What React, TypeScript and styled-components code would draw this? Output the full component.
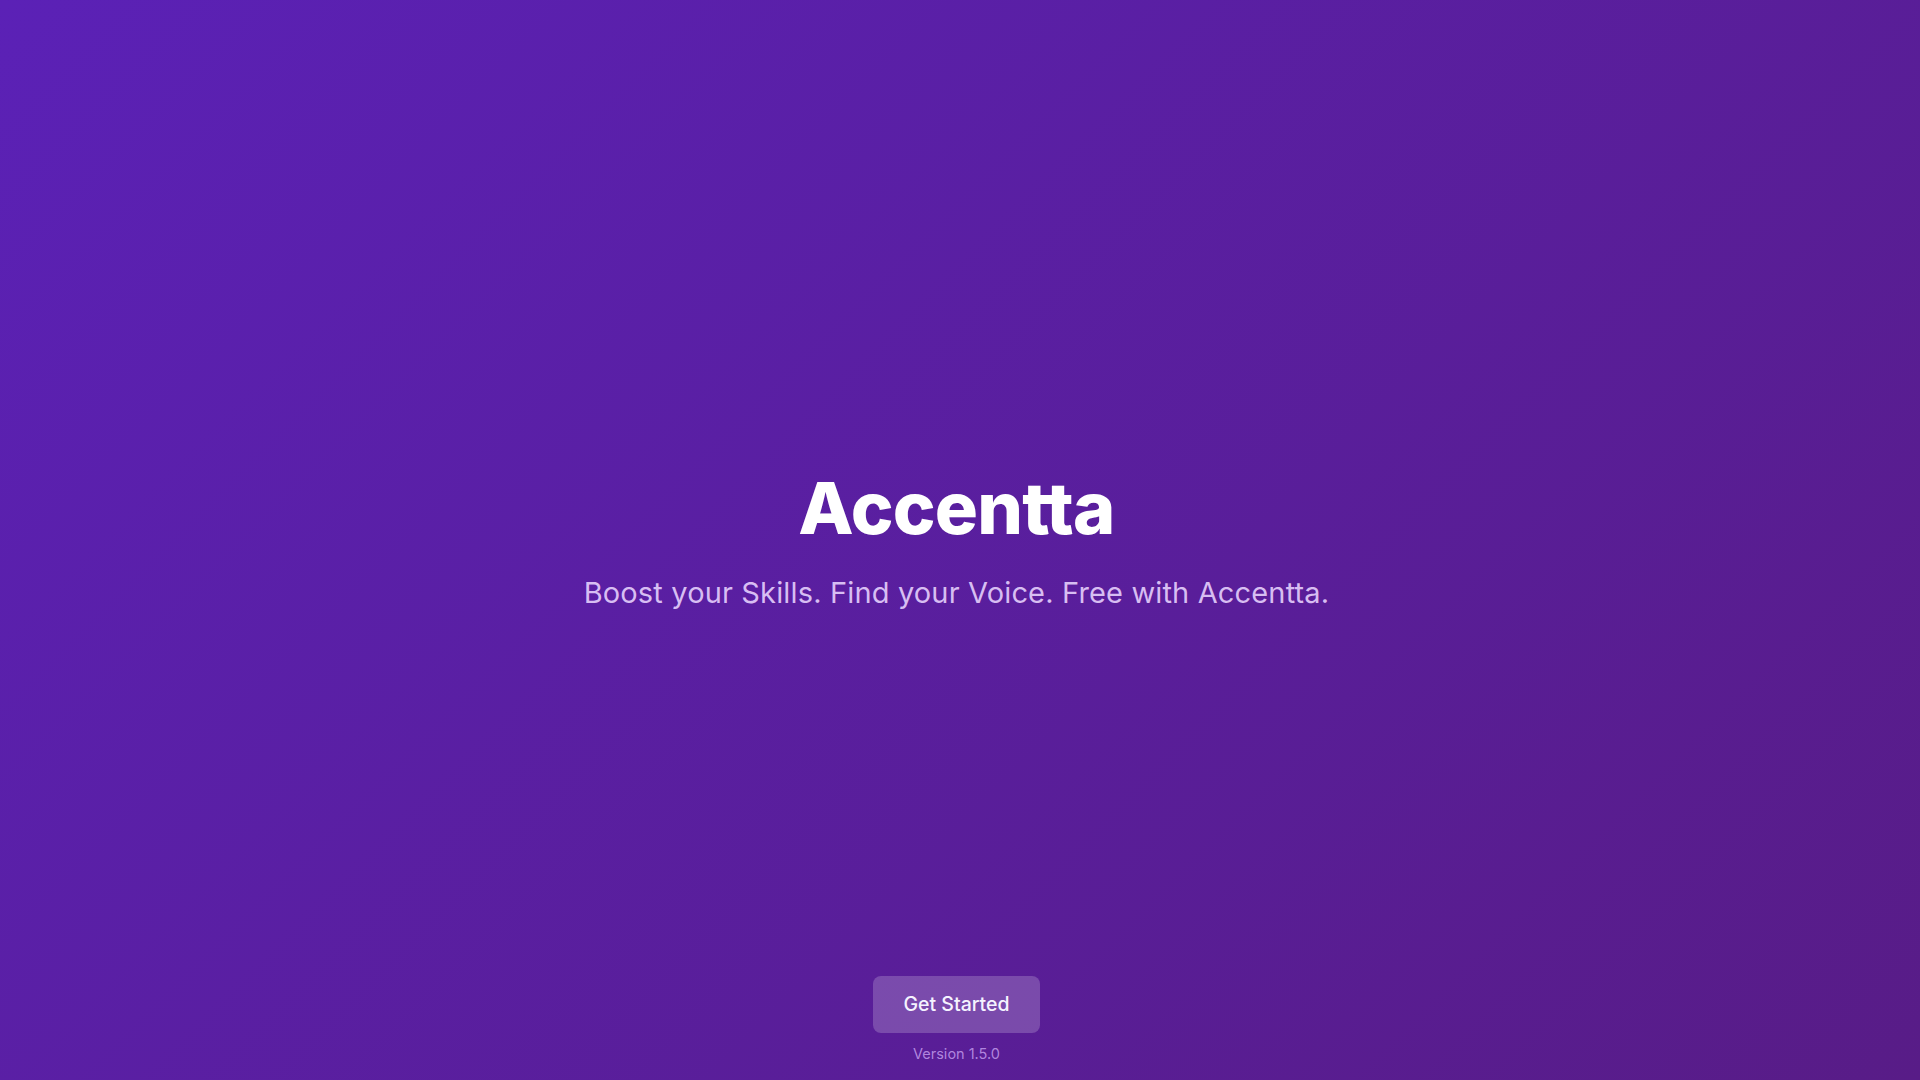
import React from "react";
import styled, { createGlobalStyle } from "styled-components";

const Global = createGlobalStyle`
  html, body, #root { margin: 0; padding: 0; height: 100%; }
  body { font-family: Inter, "Noto Sans", sans-serif; -webkit-font-smoothing: antialiased; }
  * { box-sizing: border-box; }
`;

const Screen = styled.div`
  height: 100vh;
  width: 100%;
  display: grid;
  grid-template-rows: 1fr auto 1fr;
  padding-right: 7px;
  background: linear-gradient(135deg, #5b21b6 0%, #581c87 100%);
  color: #fff;
  overflow: hidden;
`;

const Hero = styled.section`
  grid-row: 2;
  display: flex;
  flex-direction: column;
  align-items: center;
  text-align: center;
  padding-top: 2px;
`;

const Title = styled.h1`
  margin: 0 0 31px;
  font-size: 72px;
  line-height: 1;
  font-weight: 800;
  letter-spacing: -0.8px;
  color: #ffffff;
`;

const Tagline = styled.p`
  margin: 0;
  font-size: 29px;
  line-height: 36px;
  font-weight: 400;
  letter-spacing: 0.15px;
  color: rgba(233, 213, 255, 0.88);
`;

const Footer = styled.footer`
  grid-row: 3;
  display: flex;
  flex-direction: column;
  align-items: center;
  justify-content: flex-end;
  padding-bottom: 16px;
  gap: 11px;
`;

const StartButton = styled.button`
  font-family: inherit;
  font-size: 19.5px;
  font-weight: 500;
  line-height: 28px;
  color: #f5f3ff;
  background: rgba(255, 255, 255, 0.2);
  border: none;
  border-radius: 8px;
  padding: 14px 30px 15px;
  cursor: pointer;
`;

const Version = styled.span`
  font-size: 14.5px;
  line-height: 20px;
  color: rgba(216, 180, 254, 0.7);
`;

export default function App() {
  return (
    <>
      <Global />
      <Screen>
        <Hero>
          <Title>Accentta</Title>
          <Tagline>Boost your Skills. Find your Voice. Free with Accentta.</Tagline>
        </Hero>
        <Footer>
          <StartButton>Get Started</StartButton>
          <Version>Version 1.5.0</Version>
        </Footer>
      </Screen>
    </>
  );
}
